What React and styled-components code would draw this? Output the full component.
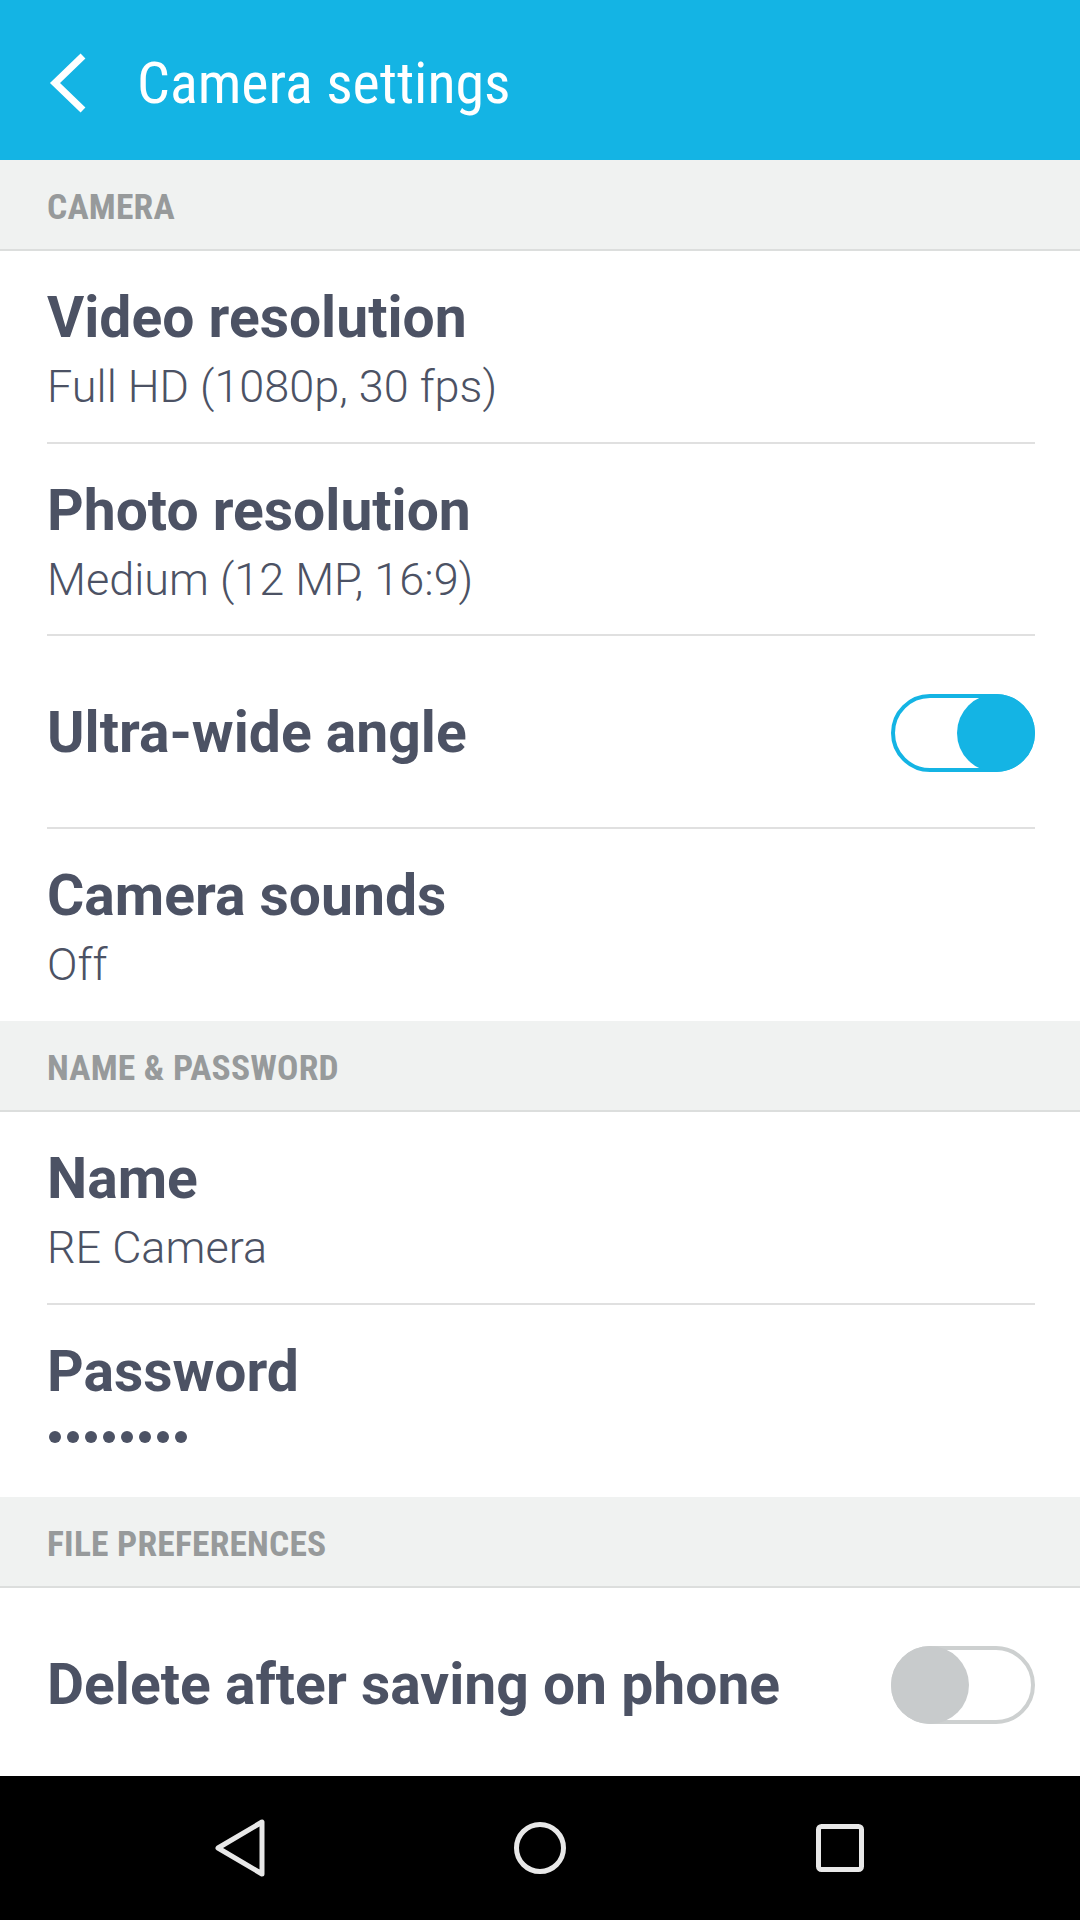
import React from "react";
import styled, { createGlobalStyle } from "styled-components";

const Global = createGlobalStyle`
  html, body { margin: 0; padding: 0; background: #ffffff; }
  body { font-family: "Roboto", "Noto Sans", sans-serif; -webkit-font-smoothing: antialiased; }
  * { box-sizing: border-box; }
`;

const Screen = styled.div`
  width: 1080px;
  height: 1920px;
  display: flex;
  flex-direction: column;
  overflow: hidden;
  background: #ffffff;
`;

const AppBar = styled.header`
  flex: 0 0 160px;
  height: 160px;
  background: #14b4e4;
  display: flex;
  align-items: center;
  padding: 6px 0 0 48px;
  gap: 49px;
`;

const BackButton = styled.button`
  width: 40px;
  height: 60px;
  padding: 0;
  border: 0;
  background: transparent;
  display: flex;
  align-items: center;
  justify-content: center;
`;

const Title = styled.h1`
  margin: 0;
  font-family: "Roboto Condensed", "Roboto", sans-serif;
  font-weight: 400;
  font-size: 58px;
  line-height: 70px;
  color: #ffffff;
`;

const Content = styled.main`
  flex: 1 1 auto;
  overflow: hidden;
  display: flex;
  flex-direction: column;
`;

const SectionHeader = styled.div`
  flex: 0 0 91px;
  height: 91px;
  background: #f0f2f1;
  border-bottom: 2px solid #dcdedd;
  display: flex;
  align-items: center;
  padding: 4px 0 0 47px;
  font-family: "Roboto Condensed", "Roboto", sans-serif;
  font-weight: 700;
  font-size: 35.5px;
  color: #979a9b;
  letter-spacing: 0.2px;
`;

const Row = styled.div`
  flex: 0 0 192.5px;
  height: 192.5px;
  padding: 0 45px 0 47px;
  display: flex;
`;

const RowInner = styled.div`
  flex: 1;
  display: flex;
  align-items: center;
  justify-content: space-between;
  border-bottom: ${(p) => (p.$last ? "0" : "2px solid #e0e0e0")};
  padding-bottom: ${(p) => (p.$last ? "2px" : "0")};
  padding-top: ${(p) => (p.$single ? "4px" : "0")};
`;

const Texts = styled.div`
  display: flex;
  flex-direction: column;
  gap: 6px;
  padding-top: ${(p) => (p.$sub ? "6px" : "0")};
`;

const ItemTitle = styled.div`
  font-weight: 700;
  font-size: 57px;
  line-height: 70px;
  color: #4c5264;
`;

const ItemSub = styled.div`
  font-weight: 300;
  font-size: 45px;
  line-height: 56px;
  color: #4c5264;
`;

const Dots = styled.div`
  display: flex;
  gap: 6px;
  height: 56px;
  align-items: center;
  padding: 0 0 8px 2px;
`;

const Dot = styled.span`
  width: 12px;
  height: 12px;
  border-radius: 50%;
  background: #4c5264;
`;

const Toggle = styled.div`
  position: relative;
  width: 144px;
  height: 78px;
  border-radius: 39px;
  border: 4px solid ${(p) => (p.$on ? "#14b4e4" : "#cdd0d0")};
  background: #ffffff;
  flex: 0 0 auto;
`;

const Knob = styled.span`
  position: absolute;
  top: -4px;
  ${(p) => (p.$on ? "right: -4px;" : "left: -4px;")}
  width: 78px;
  height: 78px;
  border-radius: 50%;
  background: ${(p) => (p.$on ? "#14b4e4" : "#c8cbcc")};
`;

const NavBar = styled.nav`
  flex: 0 0 144px;
  height: 144px;
  background: #000000;
  display: grid;
  grid-template-columns: repeat(3, 300px);
  justify-content: center;
  align-items: center;
  justify-items: center;
`;

const NavIcon = styled.svg`
  display: block;
`;

function Setting({ title, sub, dots, toggle, last }) {
  const hasSub = !!(sub || dots);
  return (
    <Row>
      <RowInner $last={last} $single={!hasSub}>
        <Texts $sub={hasSub}>
          <ItemTitle>{title}</ItemTitle>
          {sub && <ItemSub>{sub}</ItemSub>}
          {dots && (
            <Dots>
              {Array.from({ length: dots }).map((_, i) => (
                <Dot key={i} />
              ))}
            </Dots>
          )}
        </Texts>
        {toggle !== undefined && (
          <Toggle $on={toggle}>
            <Knob $on={toggle} />
          </Toggle>
        )}
      </RowInner>
    </Row>
  );
}

export default function App() {
  return (
    <>
      <Global />
      <Screen>
        <AppBar>
          <BackButton aria-label="Back">
            <svg width="40" height="60" viewBox="0 0 40 60">
              <path d="M35 3 L7 30 L35 57" fill="none" stroke="#ffffff" strokeWidth="7" strokeLinejoin="miter" />
            </svg>
          </BackButton>
          <Title>Camera settings</Title>
        </AppBar>
        <Content>
          <SectionHeader>CAMERA</SectionHeader>
          <Setting title="Video resolution" sub="Full HD (1080p, 30 fps)" />
          <Setting title="Photo resolution" sub="Medium (12 MP, 16:9)" />
          <Setting title="Ultra-wide angle" toggle={true} />
          <Setting title="Camera sounds" sub="Off" last />
          <SectionHeader>NAME &amp; PASSWORD</SectionHeader>
          <Setting title="Name" sub="RE Camera" />
          <Setting title="Password" dots={8} last />
          <SectionHeader>FILE PREFERENCES</SectionHeader>
          <Setting title="Delete after saving on phone" toggle={false} last />
        </Content>
        <NavBar>
          <NavIcon width="56" height="60" viewBox="0 0 56 60">
            <path d="M50 4 L50 56 L6 30 Z" fill="none" stroke="#e8e8e8" strokeWidth="5" strokeLinejoin="round" />
          </NavIcon>
          <NavIcon width="56" height="56" viewBox="0 0 56 56">
            <circle cx="28" cy="28" r="23.5" fill="none" stroke="#e8e8e8" strokeWidth="5" />
          </NavIcon>
          <NavIcon width="52" height="52" viewBox="0 0 52 52">
            <rect x="4.5" y="4.5" width="43" height="43" rx="3" fill="none" stroke="#e8e8e8" strokeWidth="5" />
          </NavIcon>
        </NavBar>
      </Screen>
    </>
  );
}
